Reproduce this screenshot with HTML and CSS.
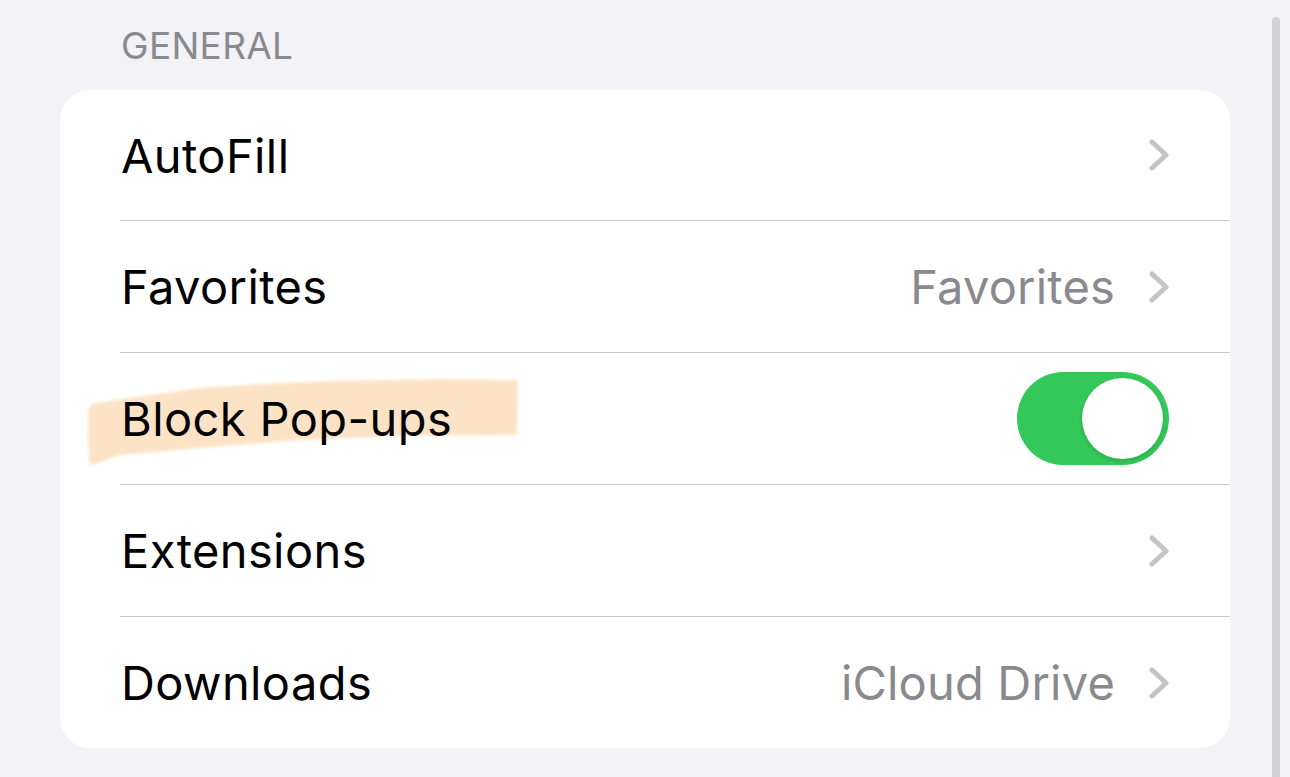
FILE: index.html
```html
<!DOCTYPE html>
<html>
<head>
<meta charset="utf-8">
<link rel="stylesheet" href="styles.css">
</head>
<body>
<div class="page">
  <div class="section-title">GENERAL</div>
  <div class="card">
    <div class="row">
      <span class="label">AutoFill</span>
      <span class="trail">
        <svg class="chev" viewBox="0 0 20 32" width="20" height="32"><polyline points="3,3 17,16 3,29" /></svg>
      </span>
    </div>
    <div class="row">
      <span class="label">Favorites</span>
      <span class="trail">
        <span class="value">Favorites</span>
        <svg class="chev" viewBox="0 0 20 32" width="20" height="32"><polyline points="3,3 17,16 3,29" /></svg>
      </span>
    </div>
    <div class="row hl-row">
      <svg class="highlight" viewBox="0 0 440 92" width="440" height="92">
        <defs><filter id="soft"><feGaussianBlur stdDeviation="1.4"/></filter></defs>
        <path filter="url(#soft)" d="M7 26 L45 20 L115 10 L175 6 L245 3 L355 1 L430 2 L433 4 L432 56 L430 57 L315 58 L215 62 L115 70 L35 77 L15 84 L5 87 L3 62 L3 32 Z"/>
      </svg>
      <span class="label">Block Pop-ups</span>
      <span class="trail">
        <span class="toggle"><span class="knob"></span></span>
      </span>
    </div>
    <div class="row">
      <span class="label">Extensions</span>
      <span class="trail">
        <svg class="chev" viewBox="0 0 20 32" width="20" height="32"><polyline points="3,3 17,16 3,29" /></svg>
      </span>
    </div>
    <div class="row">
      <span class="label">Downloads</span>
      <span class="trail">
        <span class="value">iCloud Drive</span>
        <svg class="chev" viewBox="0 0 20 32" width="20" height="32"><polyline points="3,3 17,16 3,29" /></svg>
      </span>
    </div>
  </div>
  <div class="scroll-indicator"></div>
</div>
</body>
</html>
```

FILE: styles.css
```css
html, body {
  margin: 0;
  padding: 0;
  background: #f2f2f7;
  height: 100%;
  overflow: hidden;
}
body {
  font-family: Inter, "Liberation Sans", sans-serif;
  color: #000;
}
.page {
  position: relative;
  padding: 24px 60px 0 60px;
  height: 777px;
  box-sizing: border-box;
}
.section-title {
  padding-left: 61px;
  font-size: 37px;
  line-height: 44px;
  color: #8a8a8e;
  letter-spacing: 0.3px;
  height: 66px;
}
.card {
  background: #fff;
  border-radius: 30px;
  overflow: hidden;
}
.row {
  position: relative;
  height: 131px;
  display: flex;
  align-items: center;
  justify-content: space-between;
  padding: 0 61px 0 61px;
  box-sizing: border-box;
}
.row:first-child {
  height: 130px;
}
.row + .row::before {
  content: "";
  position: absolute;
  left: 60px;
  right: 0;
  top: -1px;
  height: 1px;
  background: #c8c8cc;
}
.row + .row {
  margin-top: 1px;
}
.label {
  position: relative;
  z-index: 1;
  font-size: 47px;
  letter-spacing: 0.4px;
}
.trail {
  display: flex;
  align-items: center;
  gap: 34px;
}
.value {
  font-size: 47px;
  color: #8a8a8e;
  letter-spacing: 0.2px;
}
.chev {
  display: block;
}
.chev polyline {
  fill: none;
  stroke: #c4c4c7;
  stroke-width: 5;
  stroke-linecap: round;
  stroke-linejoin: round;
}
.highlight {
  position: absolute;
  left: 25px;
  top: 25px;
  z-index: 0;
}
.highlight path {
  fill: #fde3c6;
}
.toggle {
  display: block;
  width: 152px;
  height: 93px;
  border-radius: 47px;
  background: #34c759;
  position: relative;
}
.knob {
  position: absolute;
  right: 6px;
  top: 6px;
  width: 81px;
  height: 81px;
  border-radius: 50%;
  background: #fff;
  box-shadow: 0 2px 4px rgba(0,0,0,0.15);
}
.scroll-indicator {
  position: absolute;
  left: 1272px;
  top: 17px;
  width: 8px;
  bottom: 0;
  background: #d1d1d6;
  border-radius: 4px 4px 0 0;
}
```
